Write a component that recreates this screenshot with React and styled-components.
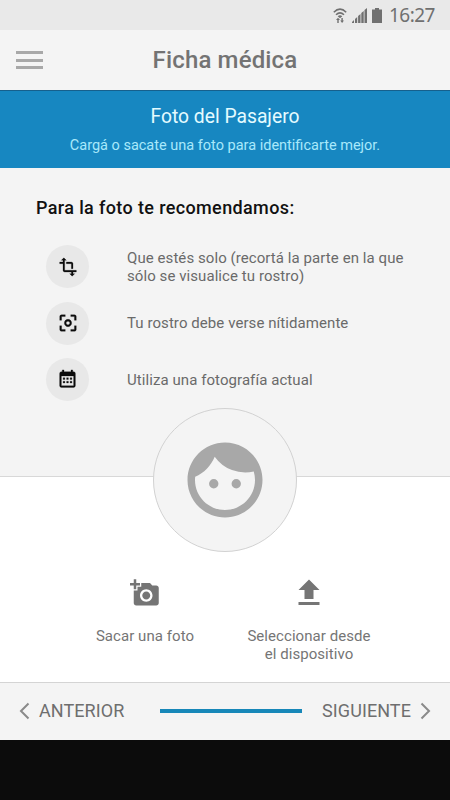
import React from 'react';
import styled, { createGlobalStyle } from 'styled-components';
import { MdAddAPhoto, MdCenterFocusWeak, MdFace, MdTransform } from 'react-icons/md';


const GlobalStyle = createGlobalStyle`
    * {
        box-sizing: border-box;
    }

    body {
        margin: 0;
        background: #0c0c0c;
        font-family: Roboto, "Liberation Sans", sans-serif;
    }

    h1, h2, h3, p, ul {
        margin: 0;
        padding: 0;
        font-weight: 400;
    }
`;

const Screen = styled.div`
    display: flex;
    flex-direction: column;
    width: 450px;
    height: 800px;
    background: #0c0c0c;
    color: #6a6a6a;
    white-space: nowrap;
`;

const StatusBar = styled.div`
    display: flex;
    align-items: center;
    justify-content: flex-end;
    height: 30px;
    padding-right: 15px;
    background: #e9e9e9;
    color: #707070;
`;

const StatusIcons = styled.span`
    display: flex;
    align-items: center;
    gap: 5px;
`;

const Clock = styled.span`
    margin-left: 7px;
    font-family: "Noto Sans", sans-serif;
    font-size: 19px;
    line-height: 30px;
    letter-spacing: -0.5px;
`;

const Header = styled.header`
    display: flex;
    align-items: center;
    height: 60px;
    padding: 0 16px;
    background: #f4f4f4;
`;

const MenuButton = styled.div`
    display: flex;
    flex-direction: column;
    gap: 4.5px;
    width: 27px;
`;

const MenuLine = styled.span`
    height: 3px;
    background: #a8a8a8;
`;

const Title = styled.h1`
    flex: 1;
    padding-right: 27px;
    font-size: 24px;
    font-weight: 500;
    letter-spacing: 0.15px;
    text-align: center;
    color: #737373;
`;

const Banner = styled.section`
    height: 78px;
    padding-top: 14px;
    border-top: 1px solid #16608d;
    background: #1787c1;
    text-align: center;
`;

const BannerTitle = styled.h2`
    font-size: 19.3px;
    line-height: 24px;
    color: #e4fbff;
`;

const BannerText = styled.p`
    margin-top: 7px;
    font-size: 14.5px;
    line-height: 20px;
    color: #a9e9fb;
`;

const Tips = styled.section`
    height: 309px;
    padding: 28px 0 0 36px;
    border-bottom: 1px solid #d8d8d8;
    background: #f4f4f4;
`;

const TipsHeading = styled.h3`
    font-size: 18px;
    font-weight: 500;
    line-height: 24px;
    letter-spacing: 0.37px;
    color: #111;
`;

const TipList = styled.ul`
    display: flex;
    flex-direction: column;
    gap: 13.5px;
    margin: 25px 0 0 10px;
    list-style: none;
`;

const Tip = styled.li`
    display: flex;
    align-items: center;
    gap: 38px;
    height: 43px;
    font-size: 15px;
    line-height: 18px;
    letter-spacing: 0.07px;
    white-space: pre-line;
`;

const TipIcon = styled.span`
    display: flex;
    align-items: center;
    justify-content: center;
    width: 43px;
    height: 43px;
    border-radius: 50%;
    background: #e8e8e8;
    color: #0c0c0c;

    path:not([fill="none"]) {
        stroke: currentColor;
        stroke-width: 0.3px;
    }
`;

const Photo = styled.section`
    display: flex;
    flex-direction: column;
    align-items: center;
    height: 205px;
    background: #fff;
`;

const Avatar = styled.div`
    display: flex;
    flex-shrink: 0;
    align-items: center;
    justify-content: center;
    width: 144px;
    height: 144px;
    margin-top: -69px;
    border: 1px solid #d2d2d2;
    border-radius: 50%;
    background: #f4f4f4;
    color: #a8a8a8;
`;

const Actions = styled.div`
    display: grid;
    grid-template-columns: 164px 164px;
    margin-top: 21px;
    padding-left: 4px;
`;

const Action = styled.div`
    display: flex;
    flex-direction: column;
    align-items: center;
    color: #757575;
`;

const ActionIcon = styled.span`
    display: flex;
    align-items: center;
    height: 40px;
`;

const ActionLabel = styled.span`
    margin-top: 14px;
    font-size: 15px;
    line-height: 18px;
    letter-spacing: 0.06px;
    text-align: center;
    white-space: pre-line;
`;

const Footer = styled.footer`
    display: grid;
    grid-template-columns: 141px 142px 1fr;
    align-items: center;
    height: 58px;
    padding: 0 19px;
    border-top: 1px solid #d4d4d4;
    background: #f4f4f4;
`;

const NavButton = styled.div`
    display: flex;
    align-items: center;
    justify-content: ${props => props.$end ? 'flex-end' : 'flex-start'};
    gap: 9px;
    padding-bottom: 2px;
    font-size: 18px;
    letter-spacing: 0.08px;
    color: #6e6e6e;
`;

const Progress = styled.div`
    height: 4px;
    margin-bottom: 1px;
    background: #1787b8;
`;

const WifiIcon = () =>
    <svg width="14" height="15" viewBox="0 0 14 15" fill="none" stroke="currentColor" strokeWidth="1.5">
        <path d="M.8 4.2Q7-2 13.2 4.2M3 6.8Q7 3 11 6.8" />
        <path d="M4.7 8.2Q7 6.4 9.3 8.2L7 10.2zM3 12l2-2.2L7 12H5.7v3H4.3v-3zM7.2 12.6h1.2V10h1.4v2.6H11L9.1 15z" fill="currentColor" stroke="none" />
    </svg>
;

const SignalIcon = () =>
    <svg width="15" height="15" viewBox="0 0 15 15" fill="currentColor">
        <path d="M0 15v-1l2-2v3zM3 15v-4l2.2-2v6zM6.1 15V8l2.4-2v9zM9.3 15V5l2.4-2v12zM12.5 15V2L15 0v15z" />
    </svg>
;

const BatteryIcon = () =>
    <svg width="10" height="15" viewBox="0 0 10 15" fill="currentColor">
        <path d="M3 0h4v1.5h3V15H0V1.5h3z" />
    </svg>
;

const CalendarIcon = () =>
    <svg width="21" height="21" viewBox="0 0 24 24" fill="currentColor">
        <path fillRule="evenodd" d="M19 3h-1V1h-2v2H8V1H6v2H5a2 2 0 0 0-2 2v14a2 2 0 0 0 2 2h14a2 2 0 0 0 2-2V5a2 2 0 0 0-2-2zM5 8h14v11H5z" />
        <path d="M7 10h2v2H7zM11 10h2v2h-2zM15 10h2v2h-2zM7 14h2v2H7zM11 14h2v2h-2zM15 14h2v2h-2z" />
    </svg>
;

const UploadIcon = () =>
    <svg width="36" height="36" viewBox="0 0 24 24" fill="currentColor">
        <path d="M9 16h6v-6h4l-7-7-7 7h4zM5 18h14v2H5z" />
    </svg>
;

const Chevron = ({ d }) =>
    <svg width="11" height="18" viewBox="0 0 11 18" fill="none" stroke="#8a8a8a" strokeWidth="2">
        <path d={d} />
    </svg>
;

const App = () =>
    <Screen>
        <GlobalStyle />
        <StatusBar>
            <StatusIcons>
                <WifiIcon />
                <SignalIcon />
                <BatteryIcon />
            </StatusIcons>
            <Clock>16:27</Clock>
        </StatusBar>
        <Header>
            <MenuButton>
                <MenuLine />
                <MenuLine />
                <MenuLine />
            </MenuButton>
            <Title>Ficha médica</Title>
        </Header>
        <Banner>
            <BannerTitle>Foto del Pasajero</BannerTitle>
            <BannerText>Cargá o sacate una foto para identificarte mejor.</BannerText>
        </Banner>
        <Tips>
            <TipsHeading>Para la foto te recomendamos:</TipsHeading>
            <TipList>
                <Tip>
                    <TipIcon><MdTransform size={20} /></TipIcon>
                    {'Que estés solo (recortá la parte en la que\nsólo se visualice tu rostro)'}
                </Tip>
                <Tip>
                    <TipIcon><MdCenterFocusWeak size={22} /></TipIcon>
                    Tu rostro debe verse nítidamente
                </Tip>
                <Tip>
                    <TipIcon><CalendarIcon /></TipIcon>
                    Utiliza una fotografía actual
                </Tip>
            </TipList>
        </Tips>
        <Photo>
            <Avatar><MdFace size={90} /></Avatar>
            <Actions>
                <Action>
                    <ActionIcon><MdAddAPhoto size={30} /></ActionIcon>
                    <ActionLabel>Sacar una foto</ActionLabel>
                </Action>
                <Action>
                    <ActionIcon><UploadIcon /></ActionIcon>
                    <ActionLabel>{'Seleccionar desde\nel dispositivo'}</ActionLabel>
                </Action>
            </Actions>
        </Photo>
        <Footer>
            <NavButton>
                <Chevron d="M9.5 1.5L2 9l7.5 7.5" />
                ANTERIOR
            </NavButton>
            <Progress />
            <NavButton $end>
                SIGUIENTE
                <Chevron d="M1.5 1.5L9 9l-7.5 7.5" />
            </NavButton>
        </Footer>
    </Screen>
;

export default App;
